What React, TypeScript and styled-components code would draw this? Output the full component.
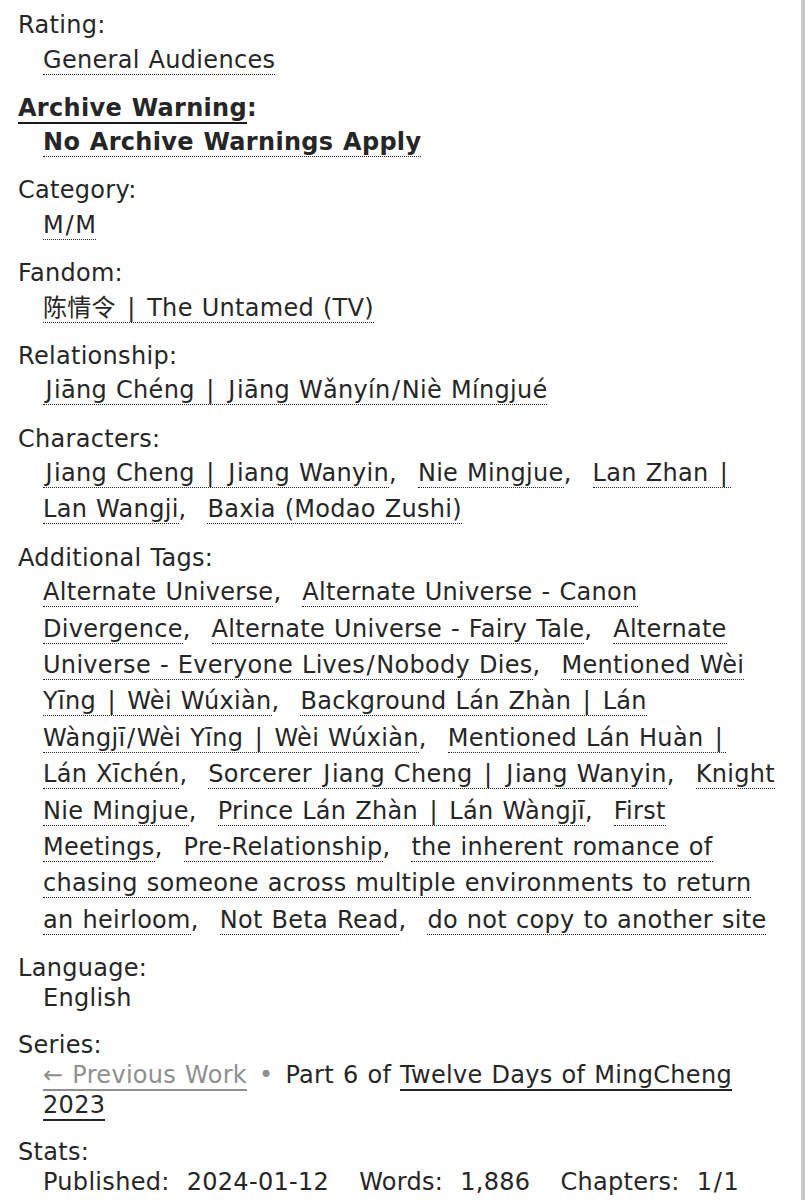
import React from "react";
import styled, { createGlobalStyle } from "styled-components";

const GlobalStyle = createGlobalStyle`
  html, body {
    margin: 0;
    padding: 0;
    background: #ffffff;
  }
  body {
    font-family: "DejaVu Sans", Verdana, "Noto Sans CJK SC", sans-serif;
    color: #262626;
  }
`;

const Frame = styled.div`
  display: flex;
  min-height: 1200px;
`;

const Content = styled.main`
  flex: 1;
  padding: 10px 26px 0 18px;
`;

const ScrollRail = styled.div`
  width: 4px;
  background: #c9c9c9;
`;

const Meta = styled.dl`
  margin: 0;
  font-size: 24px;
  letter-spacing: 0.3px;
  word-spacing: 1px;
`;

const Label = styled.dt<{ $strong?: boolean }>`
  margin: 0;
  line-height: 30px;
  font-weight: ${(p) => (p.$strong ? 700 : 400)};
`;

const Value = styled.dd<{ $tags?: boolean; $strong?: boolean }>`
  margin: 0 0 ${(p) => (p.$tags ? "14.8px" : "17px")} 25px;
  padding-top: ${(p) => (p.$tags ? "1.5px" : "0")};
  line-height: ${(p) => (p.$tags ? "36.4px" : "30px")};
  font-weight: ${(p) => (p.$strong ? 700 : 400)};
`;

const Glyph = styled.span<{ $before: number; $after: number }>`
  padding: 0 ${(p) => p.$after}px 0 ${(p) => p.$before}px;
`;

const glyphPads: Record<string, [number, number]> = {
  "|": [2.5, 2.5],
  "/": [1.4, 1.4],
  J: [2.4, 1.3],
};

function Text({ children }: { children: string }) {
  const parts: React.ReactNode[] = [];
  let run = "";
  Array.from(children).forEach((ch, i) => {
    const pad = glyphPads[ch];
    if (pad) {
      if (run) parts.push(run);
      run = "";
      parts.push(
        <Glyph key={i} $before={pad[0]} $after={pad[1]}>
          {ch}
        </Glyph>
      );
    } else {
      run += ch;
    }
  });
  if (run) parts.push(run);
  return <>{parts}</>;
}

const LabelLink = styled.a`
  color: inherit;
  text-decoration: none;
  border-bottom: 2px solid #1a1a1a;
`;

const TagList = styled.ul`
  display: inline;
  margin: 0;
  padding: 0;
  list-style: none;
`;

const TagItem = styled.li`
  display: inline;
  &:not(:last-child)::after {
    content: ",";
    margin-right: 12px;
  }
`;

const Tag = styled.a`
  color: #262626;
  text-decoration: none;
  border-bottom: 1px dotted #262626;
`;

const SeriesLink = styled.a<{ $muted?: boolean }>`
  color: ${(p) => (p.$muted ? "#8f8f8f" : "#262626")};
  text-decoration: none;
  border-bottom: 2px solid ${(p) => (p.$muted ? "#8f8f8f" : "#262626")};
`;

const Divider = styled.span`
  color: #8f8f8f;
  margin: 0 3px;
`;

const StatList = styled.dl`
  display: flex;
  flex-wrap: nowrap;
  white-space: nowrap;
  margin: 0;
`;

const StatName = styled.dt`
  margin: 0 17px 0 0;
`;

const StatValue = styled.dd`
  margin: 0 30px 0 0;
`;

type TagGroup = {
  label: string;
  tags: string[];
};

const tagGroups: TagGroup[] = [
  { label: "Category:", tags: ["M/M"] },
  { label: "Fandom:", tags: ["陈情令 | The Untamed (TV)"] },
  { label: "Relationship:", tags: ["Jiāng Chéng | Jiāng Wǎnyín/Niè Míngjué"] },
  {
    label: "Characters:",
    tags: [
      "Jiang Cheng | Jiang Wanyin",
      "Nie Mingjue",
      "Lan Zhan | Lan Wangji",
      "Baxia (Modao Zushi)",
    ],
  },
  {
    label: "Additional Tags:",
    tags: [
      "Alternate Universe",
      "Alternate Universe - Canon Divergence",
      "Alternate Universe - Fairy Tale",
      "Alternate Universe - Everyone Lives/Nobody Dies",
      "Mentioned Wèi Yīng | Wèi Wúxiàn",
      "Background Lán Zhàn | Lán Wàngjī/Wèi Yīng | Wèi Wúxiàn",
      "Mentioned Lán Huàn | Lán Xīchén",
      "Sorcerer Jiang Cheng | Jiang Wanyin",
      "Knight Nie Mingjue",
      "Prince Lán Zhàn | Lán Wàngjī",
      "First Meetings",
      "Pre-Relationship",
      "the inherent romance of chasing someone across multiple environments to return an heirloom",
      "Not Beta Read",
      "do not copy to another site",
    ],
  },
];

const stats: [string, string][] = [
  ["Published:", "2024-01-12"],
  ["Words:", "1,886"],
  ["Chapters:", "1/1"],
];

function Tags({ tags }: { tags: string[] }) {
  return (
    <TagList>
      {tags.map((t, i) => (
        <React.Fragment key={t}>
          <TagItem>
            <Tag href="#">
              <Text>{t}</Text>
            </Tag>
          </TagItem>
          {i < tags.length - 1 ? " " : null}
        </React.Fragment>
      ))}
    </TagList>
  );
}

export default function App() {
  return (
    <>
      <GlobalStyle />
      <Frame>
        <Content>
          <Meta>
            <Label>Rating:</Label>
            <Value $tags>
              <Tags tags={["General Audiences"]} />
            </Value>

            <Label $strong>
              <LabelLink href="#">Archive Warning</LabelLink>:
            </Label>
            <Value $tags $strong>
              <Tags tags={["No Archive Warnings Apply"]} />
            </Value>

            {tagGroups.map((g) => (
              <React.Fragment key={g.label}>
                <Label>{g.label}</Label>
                <Value $tags>
                  <Tags tags={g.tags} />
                </Value>
              </React.Fragment>
            ))}

            <Label>Language:</Label>
            <Value>English</Value>

            <Label>Series:</Label>
            <Value>
              <SeriesLink href="#" $muted>
                ← Previous Work
              </SeriesLink>{" "}
              <Divider>•</Divider> Part 6 of{" "}
              <SeriesLink href="#">Twelve Days of MingCheng 2023</SeriesLink>
            </Value>

            <Label>Stats:</Label>
            <Value>
              <StatList>
                {stats.map(([k, v]) => (
                  <React.Fragment key={k}>
                    <StatName>{k}</StatName>
                    <StatValue>
                      <Text>{v}</Text>
                    </StatValue>
                  </React.Fragment>
                ))}
              </StatList>
            </Value>
          </Meta>
        </Content>
        <ScrollRail />
      </Frame>
    </>
  );
}
